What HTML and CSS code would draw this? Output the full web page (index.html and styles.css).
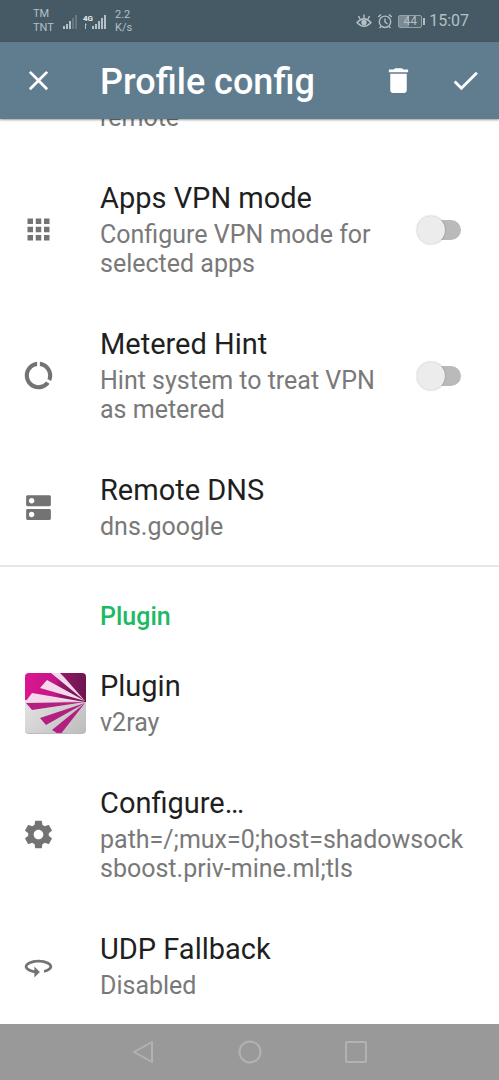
FILE: index.html
```html
<!DOCTYPE html>
<html lang="en">
<head>
<meta charset="utf-8">
<meta name="viewport" content="width=device-width, initial-scale=1">
<title>Profile config</title>
<link rel="stylesheet" href="styles.css">
</head>
<body>
<div class="screen">
  <div class="status">
    <div class="status-side">
      <div class="status-stack carrier"><span>TM</span><span>TNT</span></div>
      <svg class="signals" viewBox="0 0 44 20" width="44" height="20" aria-hidden="true">
        <g fill="currentColor">
          <path d="M0 15h2v3H0zM3 13h2v5H3zM6 10h2v8H6z"/>
          <path d="M9 7h2v11H9zM12 4h2v14h-2z" opacity=".3"/>
          <path d="M29 15h2v3h-2zM32 13h2v5h-2zM35 10h2v8h-2zM38 7h2v11h-2zM41 4h2v14h-2z"/>
          <path d="M22 12l2 2h-1v4h-1z"/>
        </g>
        <text class="network" x="20" y="10">4G</text>
      </svg>
      <div class="status-stack rate"><span>2.2</span><span>K/s</span></div>
    </div>
    <div class="status-side right">
      <svg viewBox="0 0 16 16" width="16" height="16" fill="none" stroke="currentColor" stroke-width="1.4" aria-hidden="true">
        <path d="M1 9.500Q8 2 15 9.500Q8 17 1 9.500zM8 5V1.500M4 6L2.500 3M12 6l1.500-3"/><circle cx="8" cy="9.500" r="2" fill="currentColor"/>
      </svg>
      <svg viewBox="0 0 16 16" width="16" height="16" fill="none" stroke="currentColor" stroke-width="1.400" aria-hidden="true">
        <circle cx="8" cy="8.800" r="5.700"/><path d="M8 5.500V9l2.500 2M1.200 4L4 1.500M12 1.500L14.800 4M4 13.500l-1.500 1.500M12 13.500l1.500 1.500"/>
      </svg>
      <span class="battery">44</span>
      <span class="clock">15:07</span>
    </div>
  </div>

  <header class="appbar">
    <button class="tool" type="button" aria-label="Close"><svg class="icon" viewBox="0 0 24 24"><path d="M19 6.410L17.590 5 12 10.590 6.410 5 5 6.410 10.590 12 5 17.590 6.410 19 12 13.410 17.590 19 19 17.590 13.410 12z"/></svg></button>
    <h1 class="heading">Profile config</h1>
    <button class="tool" type="button" aria-label="Delete"><svg class="icon" viewBox="0 0 24 24"><path d="M6 19c0 1.100.9 2 2 2h8c1.100 0 2-.9 2-2V7H6v12zM19 4h-3.500l-1-1h-5l-1 1H5v2h14V4z"/></svg></button>
    <button class="tool" type="button" aria-label="Apply"><svg class="icon" viewBox="0 0 24 24"><path d="M9 16.170L4.830 12l-1.420 1.410L9 19 21 7l-1.410-1.410z"/></svg></button>
  </header>

  <main class="content">
    <section class="list">
      <div class="row"><div class="lead"></div><div class="text"><p class="summary">remote</p></div></div>
      <div class="row">
        <div class="lead"><svg class="icon" viewBox="0 0 24 24"><path d="M4 8h4V4H4v4zm6 12h4v-4h-4v4zm-6 0h4v-4H4v4zm0-6h4v-4H4v4zm6 0h4v-4h-4v4zm6-10v4h4V4h-4zm-6 4h4V4h-4v4zm6 6h4v-4h-4v4zm0 6h4v-4h-4v4z"/></svg></div>
        <label class="text" for="apps"><span class="title">Apps VPN mode</span><span class="summary">Configure VPN mode for selected apps</span></label>
        <input class="switch" id="apps" type="checkbox" role="switch">
      </div>
      <div class="row">
        <div class="lead"><svg class="icon" viewBox="0 0 24 24"><path d="M13 2.050v3.030c3.390.49 6 3.390 6 6.920 0 .9-.18 1.750-.48 2.540l2.600 1.530c.56-1.240.88-2.620.88-4.070 0-5.180-3.950-9.450-9-9.950zM12 19c-3.870 0-7-3.130-7-7 0-3.530 2.610-6.430 6-6.920V2.050c-5.060.5-9 4.760-9 9.950 0 5.520 4.470 10 9.990 10 3.310 0 6.240-1.610 8.060-4.090l-2.600-1.530C16.170 17.980 14.210 19 12 19z"/></svg></div>
        <label class="text" for="metered"><span class="title">Metered Hint</span><span class="summary">Hint system to treat VPN as metered</span></label>
        <input class="switch" id="metered" type="checkbox" role="switch">
      </div>
      <div class="row">
        <div class="lead"><svg class="icon" viewBox="0 0 24 24"><path d="M20 13H4c-.55 0-1 .45-1 1v6c0 .55.45 1 1 1h16c.55 0 1-.45 1-1v-6c0-.55-.45-1-1-1zM7 19c-1.100 0-2-.9-2-2s.9-2 2-2 2 .9 2 2-.9 2-2 2zM20 3H4c-.55 0-1 .45-1 1v6c0 .55.45 1 1 1h16c.55 0 1-.45 1-1V4c0-.55-.45-1-1-1zM7 9c-1.100 0-2-.9-2-2s.9-2 2-2 2 .9 2 2-.9 2-2 2z"/></svg></div>
        <div class="text"><h3 class="title">Remote DNS</h3><p class="summary">dns.google</p></div>
      </div>
    </section>
    <section class="list">
      <h2 class="category">Plugin</h2>
      <div class="row">
        <div class="lead">
          <svg class="logo" viewBox="0 0 66 66" aria-hidden="true">
            <defs>
              <linearGradient id="pink" x2="1"><stop offset="0" stop-color="#dc1690"/><stop offset=".5" stop-color="#c4168a"/><stop offset=".6" stop-color="#8e1a66"/><stop offset="1" stop-color="#6d1550"/></linearGradient>
              <linearGradient id="silver" x2="1" y2="1"><stop offset="0" stop-color="#f0eff0"/><stop offset="1" stop-color="#bdbcbd"/></linearGradient>
              <clipPath id="tile"><rect x="3" y="3" width="61" height="60" rx="4"/></clipPath>
            </defs>
            <rect x="3" y="4" width="61" height="60" rx="4" fill="#bbb"/>
            <g clip-path="url(#tile)">
              <path fill="url(#silver)" d="M3 3h61v60H3z"/>
              <path fill="url(#pink)" d="M3 3h61v29H3z"/>
              <path fill="#f5d9ea" d="M63 31L29 3h9l4 4zM63 31L18 18l7-8zM63 32L4 31l6-8z"/>
              <path fill="#eddbe6" d="M63 32L3 30v3z"/>
              <path fill="#b3207f" d="M63 32L4 33l6 7zM63 33L18 48l6 7zM63 33L30 60l8 5z"/>
            </g>
          </svg>
        </div>
        <div class="text"><h3 class="title">Plugin</h3><p class="summary">v2ray</p></div>
      </div>
      <div class="row">
        <div class="lead"><svg class="icon" viewBox="0 0 24 24"><path d="M19.430 12.980c.04-.32.07-.64.07-.98s-.03-.66-.07-.98l2.110-1.650c.19-.15.24-.42.12-.64l-2-3.460c-.12-.22-.39-.3-.61-.22l-2.490 1c-.52-.4-1.080-.73-1.690-.98l-.38-2.650C14.460 2.180 14.250 2 14 2h-4c-.25 0-.46.18-.49.42l-.38 2.650c-.61.25-1.170.59-1.690.98l-2.490-1c-.23-.09-.49 0-.61.22l-2 3.460c-.13.22-.07.49.12.64l2.110 1.650c-.04.32-.07.65-.07.98s.03.66.07.98l-2.110 1.650c-.19.15-.24.42-.12.64l2 3.460c.12.22.39.3.61.22l2.490-1c.52.4 1.080.73 1.690.98l.38 2.650c.03.24.24.42.49.42h4c.25 0 .46-.18.49-.42l.38-2.650c.61-.25 1.170-.59 1.690-.98l2.490 1c.23.09.49 0 .61-.22l2-3.460c.12-.22.07-.49-.12-.64l-2.110-1.650zM12 15.500c-1.930 0-3.500-1.570-3.500-3.500s1.570-3.500 3.500-3.500 3.500 1.570 3.500 3.500-1.570 3.500-3.500 3.500z"/></svg></div>
        <div class="text"><h3 class="title">Configure…</h3><p class="summary break">path=/;mux=0;host=shadowsocksboost.priv-mine.ml;tls</p></div>
      </div>
      <div class="row">
        <div class="lead"><svg class="icon" viewBox="0 0 24 24"><path d="M12 7C6.480 7 2 9.240 2 12c0 2.240 2.940 4.130 7 4.770V20l4-4-4-4v2.730c-3.150-.56-5-1.900-5-2.730 0-1.060 3.040-3 8-3s8 1.940 8 3c0 .73-1.460 1.890-4 2.530v2.050c3.530-.77 6-2.530 6-4.580 0-2.760-4.480-5-10-5z"/></svg></div>
        <div class="text"><h3 class="title">UDP Fallback</h3><p class="summary">Disabled</p></div>
      </div>
    </section>
  </main>

  <nav class="navbar" aria-label="System">
    <button class="tool" type="button" aria-label="Back"><svg class="key" viewBox="0 0 24 24"><path d="M20 2v20L2 12z"/></svg></button>
    <button class="tool" type="button" aria-label="Home"><svg class="key" viewBox="0 0 24 24"><circle cx="12" cy="12" r="10.500"/></svg></button>
    <button class="tool" type="button" aria-label="Recents"><svg class="key" viewBox="0 0 24 24"><rect x="2" y="2" width="20" height="20" rx="1"/></svg></button>
  </nav>
</div>
</body>
</html>
```
FILE: styles.css
```css
* { box-sizing: border-box; }

body {
  margin: 0;
  font-family: Roboto, "Noto Sans", sans-serif;
  background: #fff;
  color: #1f1f1f;
}

h1, h2, h3, p { margin: 0; font-weight: 400; }

.screen {
  display: flex;
  flex-direction: column;
  height: 100vh;
}

.status {
  display: flex;
  flex: none;
  align-items: center;
  justify-content: space-between;
  height: 42px;
  padding: 0 30px 0 33px;
  background: #455a64;
  color: #b4c0c6;
}

.status-side { display: flex; align-items: center; }
.status-side.right { gap: 5px; }

.status-stack {
  display: flex;
  flex-direction: column;
  font-size: 11px;
  line-height: 14px;
}

.carrier { width: 30px; }
.rate { margin-left: 8px; line-height: 13px; }

.network { font-size: 8px; font-weight: 700; fill: #e4eaed; }

.battery {
  position: relative;
  width: 24px;
  height: 13px;
  border: 1px solid #93a2a9;
  border-radius: 2px;
  background: linear-gradient(90deg, #7b8b93 45%, #50646e 45%);
  font-size: 12px;
  line-height: 11px;
  text-align: center;
}

.battery::after {
  content: "";
  position: absolute;
  top: 2px;
  right: -4px;
  width: 2px;
  height: 7px;
  background: currentColor;
}

.clock { margin-left: 2px; font-size: 16px; line-height: 20px; }

.appbar {
  display: flex;
  flex: none;
  align-items: center;
  gap: 34px;
  height: 77px;
  padding: 0 17px 0 22px;
  background: #607d8f;
  color: #fff;
  box-shadow: 0 1px 2px #0006;
  z-index: 1;
}

.heading {
  flex: 1;
  margin-left: 11px;
  padding-top: 2px;
  font-size: 36px;
  line-height: 42px;
  font-weight: 500;
}

.tool {
  display: flex;
  padding: 0;
  border: 0;
  background: none;
  color: inherit;
}

.icon { display: block; width: 33px; height: 33px; fill: currentColor; }

.content {
  display: flex;
  flex: 1 1 0;
  flex-direction: column;
  justify-content: flex-end;
  min-height: 0;
  overflow: hidden;
}

.list + .list { border-top: 2px solid #e6e6e6; }

.category {
  padding: 34px 22px 11px 100px;
  color: #1db963;
  font-size: 25px;
  line-height: 32px;
  font-weight: 500;
}

.row {
  display: flex;
  align-items: center;
  padding: 25px 30px 24px 22px;
}

.lead { flex: none; width: 78px; color: #737373; }

.logo { display: block; width: 66px; height: 66px; }

.text {
  display: flex;
  flex: 1;
  flex-direction: column;
  gap: 5px;
  min-width: 0;
}

.title { font-size: 29px; line-height: 34px; }
.summary { color: #797979; font-size: 25px; line-height: 29px; }
.break { word-break: break-all; }

.switch {
  appearance: none;
  position: relative;
  flex: none;
  width: 44px;
  height: 28px;
  margin: 0 8px 0 16px;
}

.switch::before {
  content: "";
  position: absolute;
  inset: 4px 0 4px 4px;
  border-radius: 10px;
  background: #bababa;
}

.switch::after {
  content: "";
  position: absolute;
  left: 0;
  top: 0;
  width: 28px;
  height: 28px;
  border-radius: 50%;
  background: #ececec;
  box-shadow: 0 0 2px #0005;
}

.switch:checked::after { left: 16px; }

.navbar {
  display: flex;
  flex: none;
  align-items: center;
  justify-content: center;
  gap: 82px;
  height: 56px;
  background: #999;
  color: #b2b2b2;
}

.key {
  display: block;
  width: 24px;
  height: 24px;
  fill: none;
  stroke: currentColor;
  stroke-width: 2;
  stroke-linejoin: round;
}
```
